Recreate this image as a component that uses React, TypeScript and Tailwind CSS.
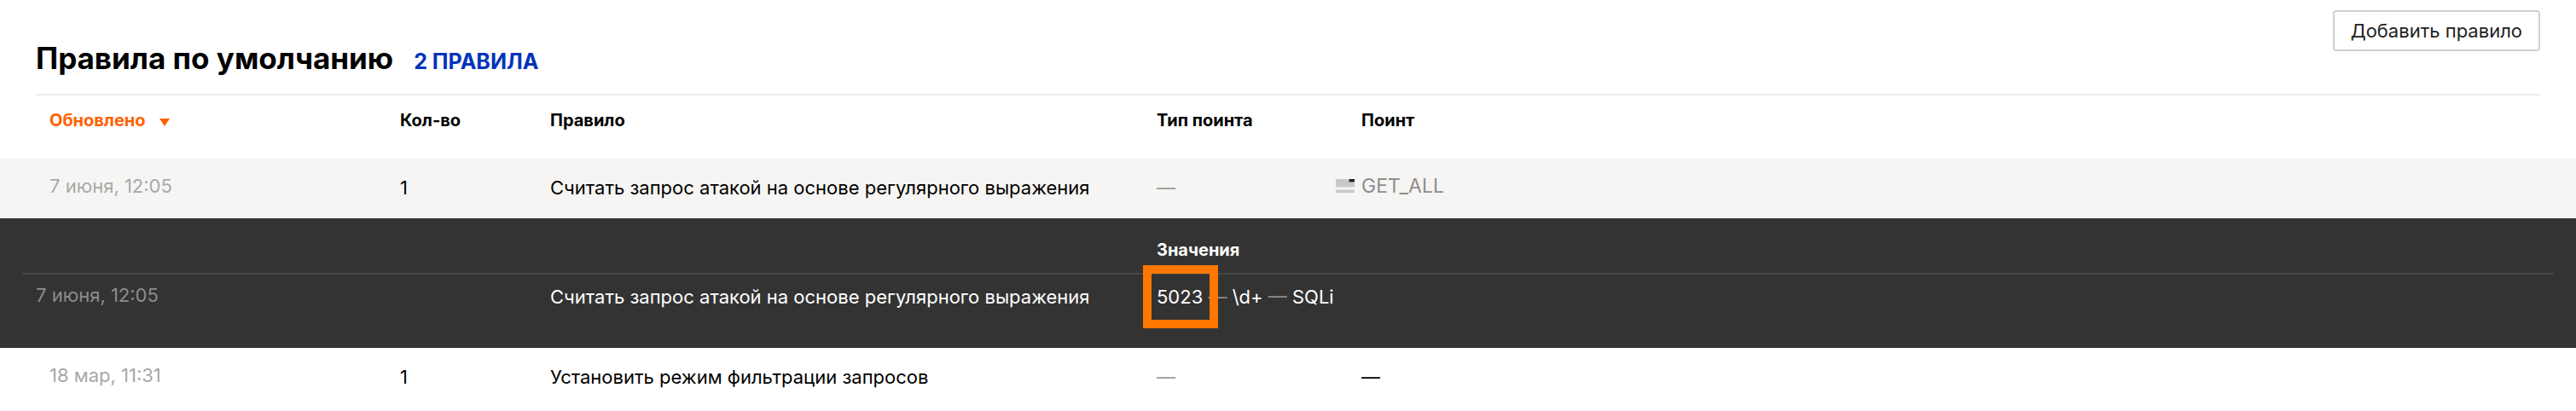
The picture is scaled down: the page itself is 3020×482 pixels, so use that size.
import type { ReactNode } from "react";

const columns = (
  <colgroup>
    <col className="w-[469px]" />
    <col className="w-[176px]" />
    <col className="w-[711px]" />
    <col className="w-[210px]" />
    <col />
  </colgroup>
);

function HeaderCell({ children, className = "" }: { children: ReactNode; className?: string }) {
  return (
    <th scope="col" className={`pt-[15px] text-left align-top text-[20px] leading-7 font-bold ${className}`}>
      {children}
    </th>
  );
}

function PointIcon() {
  return (
    <svg width="22" height="16" viewBox="0 0 22 16" aria-hidden="true">
      <path d="M0 0h22v9H0z" fill="#c8c8c7" />
      <path d="M0 9h22v1H0zM0 12h22v1H0z" fill="#e0dfde" />
      <path d="M0 13h22v3H0z" fill="#c8c8c7" />
      <path d="M15 0h7v4h-7z" fill="#8f8f8e" />
      <path d="M16 0h6v3h-6z" fill="#222" />
    </svg>
  );
}

export default function App() {
  return (
    <main className="w-full bg-white font-['Inter',sans-serif] text-[22px] leading-7 text-black">
      <header className="mx-[42px] flex h-28 items-start justify-between border-b-2 border-[#ecece9] pt-3">
        <div className="flex items-baseline gap-6 pt-8">
          <h1 className="text-[35px] leading-12 font-bold">Правила по умолчанию</h1>
          <span className="text-[25px] font-bold text-[#0033bb]">2 ПРАВИЛА</span>
        </div>
        <button type="button" className="h-12 rounded border-2 border-[#d0d0d0] px-[19px] text-[#222]">
          Добавить правило
        </button>
      </header>

      <table className="w-full table-fixed border-collapse">
        {columns}
        <thead>
          <tr className="h-[74px]">
            <HeaderCell className="pl-[58px] text-[#ff6200]">
              <button type="button" className="flex items-center gap-4">
                Обновлено
                <svg width="12" height="9" viewBox="0 0 12 9" className="mt-1" aria-hidden="true">
                  <path d="M0 0h12L6 9z" fill="currentColor" />
                </svg>
              </button>
            </HeaderCell>
            <HeaderCell>Кол-во</HeaderCell>
            <HeaderCell>Правило</HeaderCell>
            <HeaderCell>Тип поинта</HeaderCell>
            <HeaderCell className="pl-[30px]">Поинт</HeaderCell>
          </tr>
        </thead>
        <tbody>
          <tr className="h-[70px] bg-[#f6f5f3] align-top">
            <td className="pt-[18px] pl-[58px] text-[#a8a8a7]">7 июня, 12:05</td>
            <td className="pt-5">1</td>
            <td className="pt-5">Считать запрос атакой на основе регулярного выражения</td>
            <td className="pt-5 text-[#999]">—</td>
            <td className="pt-[18px] text-[23px] text-[#8d8d8c]">
              <span className="flex items-center gap-2">
                <PointIcon />
                GET_ALL
              </span>
            </td>
          </tr>
          <tr className="bg-[#333] text-white">
            <td colSpan={5} className="h-[152px] px-[26px] align-top">
              <table className="w-full table-fixed border-collapse">
                <colgroup>
                  <col className="w-[619px]" />
                  <col className="w-[711px]" />
                  <col />
                </colgroup>
                <thead>
                  <tr className="h-[65px] border-b-2 border-[#474747]">
                    <td />
                    <td />
                    <th scope="col" className="pt-2.5 text-left text-[20px] font-bold">Значения</th>
                  </tr>
                </thead>
                <tbody>
                  <tr className="align-top">
                    <td className="pt-2.5 pl-4 text-[#8d8d8d]">7 июня, 12:05</td>
                    <td className="pt-3">Считать запрос атакой на основе регулярного выражения</td>
                    <td className="pt-3">
                      <span className="relative">
                        5023
                        <span className="absolute -top-6 -right-[18px] -bottom-6 -left-4 border-10 border-[#ff7700]" />
                      </span>
                      <span className="text-[#8d8d8d]"> — </span>
                      {"\\d+"}
                      <span className="text-[#8d8d8d]"> — </span>
                      SQLi
                    </td>
                  </tr>
                </tbody>
              </table>
            </td>
          </tr>
          <tr className="h-[74px] align-top">
            <td className="pt-[18px] pl-[58px] text-[#a8a8a7]">18 мар, 11:31</td>
            <td className="pt-5">1</td>
            <td className="pt-5">Установить режим фильтрации запросов</td>
            <td className="pt-5 text-[#999]">—</td>
            <td className="pt-5 pl-[30px]">—</td>
          </tr>
        </tbody>
      </table>
    </main>
  );
}
